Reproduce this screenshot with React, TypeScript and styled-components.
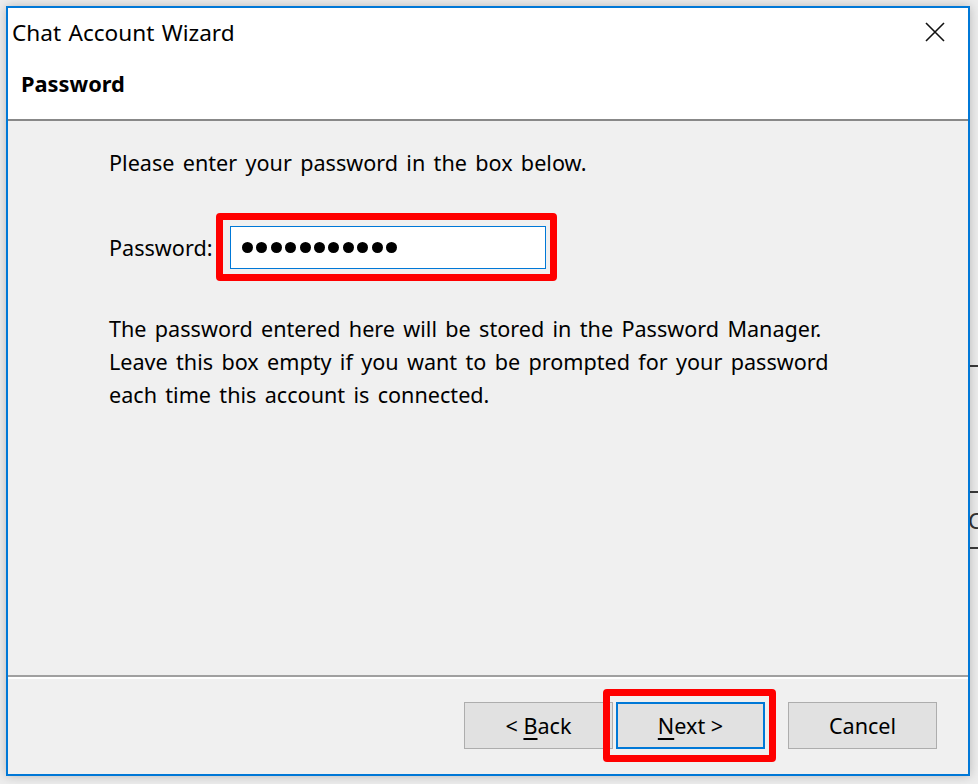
import React from "react";
import styled, { createGlobalStyle } from "styled-components";

const GlobalStyle = createGlobalStyle`
  html, body {
    margin: 0;
    padding: 0;
    background: #ededed;
    overflow: hidden;
  }
  body {
    font-family: "Noto Sans", "Open Sans", sans-serif;
    color: #000;
  }
`;

const Desktop = styled.div`
  position: relative;
  width: 978px;
  height: 784px;
  padding: 6px;
  box-sizing: border-box;
`;

/* window peeking out behind the dialog on the right */
const BackWindow = styled.div`
  position: absolute;
  left: 930px;
  top: 365px;
  width: 120px;
  height: 300px;
  border-top: 2px solid #3a3a3a;
  padding-top: 124px;
  box-sizing: border-box;
`;

const BackRow = styled.div`
  height: 58px;
  border-top: 2px solid #3a3a3a;
  border-bottom: 2px solid #3a3a3a;
  box-sizing: border-box;
  padding-left: 38px;
  font-size: 22px;
  line-height: 54px;
  color: #333;
`;

const Dialog = styled.div`
  position: relative;
  width: 964px;
  height: 770px;
  box-sizing: border-box;
  border: 2px solid #0078d7;
  background: #f0f0f0;
  display: flex;
  flex-direction: column;
  box-shadow: 0 0 10px rgba(0, 0, 0, 0.22);
`;

const TitleBar = styled.div`
  height: 48px;
  background: #fff;
  display: flex;
  align-items: center;
  justify-content: space-between;
  padding: 0 22px 0 4px;
  font-size: 22.6px;
  word-spacing: 1.5px;
`;

const CloseButton = styled.div`
  width: 22px;
  height: 22px;
  display: flex;
  align-items: center;
  justify-content: center;
`;

const Header = styled.div`
  height: 65px;
  box-sizing: border-box;
  background: #fff;
  border-bottom: 2px solid #888;
  display: flex;
  align-items: center;
  padding: 0 0 8px 13px;
  font-size: 21.8px;
  font-weight: 700;
`;

const Content = styled.div`
  flex: 1;
  padding: 25px 0 0 101px;
  font-size: 21.6px;
  word-spacing: 2.7px;
  line-height: 33px;
`;

const Line = styled.div`
  height: 33px;
`;

const PasswordRow = styled.div`
  margin-top: 47px;
  display: flex;
  align-items: center;
  height: 43px;
`;

const Label = styled.div`
  width: 121px;
`;

const Anchor = styled.div<{ $gapLeft?: number; $gapRight?: number }>`
  position: relative;
  display: flex;
  margin-left: ${(p) => p.$gapLeft ?? 0}px;
  margin-right: ${(p) => p.$gapRight ?? 0}px;
`;

const Highlight = styled.div<{ $t: number; $r: number; $b: number; $l: number }>`
  position: absolute;
  top: ${(p) => -p.$t}px;
  right: ${(p) => -p.$r}px;
  bottom: ${(p) => -p.$b}px;
  left: ${(p) => -p.$l}px;
  border: 7px solid #ff0000;
  border-radius: 4px;
  pointer-events: none;
`;

const PasswordBox = styled.div`
  width: 316px;
  height: 43px;
  box-sizing: border-box;
  border: 1px solid #0078d7;
  background: #fff;
  display: flex;
  align-items: center;
  gap: 3.4px;
  padding-left: 11px;
`;

const Dot = styled.span`
  width: 11px;
  height: 11px;
  border-radius: 50%;
  background: #000;
`;

const Note = styled.p`
  margin: 43px 0 0;
`;

const FooterRule = styled.div`
  height: 2px;
  background: #a0a0a0;
  border-bottom: 2px solid #fff;
`;

const Footer = styled.div`
  height: 95px;
  display: flex;
  justify-content: flex-end;
  align-items: flex-start;
  padding: 23px 31px 0 0;
  box-sizing: border-box;
`;

const Button = styled.div<{ $default?: boolean }>`
  width: 149px;
  height: 47px;
  box-sizing: border-box;
  background: #e1e1e1;
  border: ${(p) => (p.$default ? "2px solid #0078d7" : "1px solid #adadad")};
  display: flex;
  align-items: center;
  justify-content: center;
  font-size: 21.6px;
  u {
    text-decoration-thickness: 2px;
    text-underline-offset: 4px;
  }
`;

export default function App() {
  return (
    <>
      <GlobalStyle />
      <Desktop>
        <BackWindow>
          <BackRow>Connect</BackRow>
        </BackWindow>
        <Dialog>
          <TitleBar>
            <span>Chat Account Wizard</span>
            <CloseButton>
              <svg width="20" height="20" viewBox="0 0 20 20">
                <path d="M1 1 L19 19 M19 1 L1 19" stroke="#111" strokeWidth="1.6" />
              </svg>
            </CloseButton>
          </TitleBar>
          <Header>Password</Header>
          <Content>
            <Line>Please enter your password in the box below.</Line>
            <PasswordRow>
              <Label>Password:</Label>
              <Anchor>
                <Highlight $t={13} $r={11} $b={12} $l={14} />
                <PasswordBox>
                  {Array.from({ length: 11 }).map((_, i) => (
                    <Dot key={i} />
                  ))}
                </PasswordBox>
              </Anchor>
            </PasswordRow>
            <Note>
              The password entered here will be stored in the Password Manager.
              <br />
              Leave this box empty if you want to be prompted for your password
              <br />
              each time this account is connected.
            </Note>
          </Content>
          <FooterRule />
          <Footer>
            <Button>
              &lt;&nbsp;<u>B</u>ack
            </Button>
            <Anchor $gapLeft={3} $gapRight={23}>
              <Highlight $t={13} $r={11} $b={13} $l={13} />
              <Button $default>
                <u>N</u>ext&nbsp;&gt;
              </Button>
            </Anchor>
            <Button>Cancel</Button>
          </Footer>
        </Dialog>
      </Desktop>
    </>
  );
}
